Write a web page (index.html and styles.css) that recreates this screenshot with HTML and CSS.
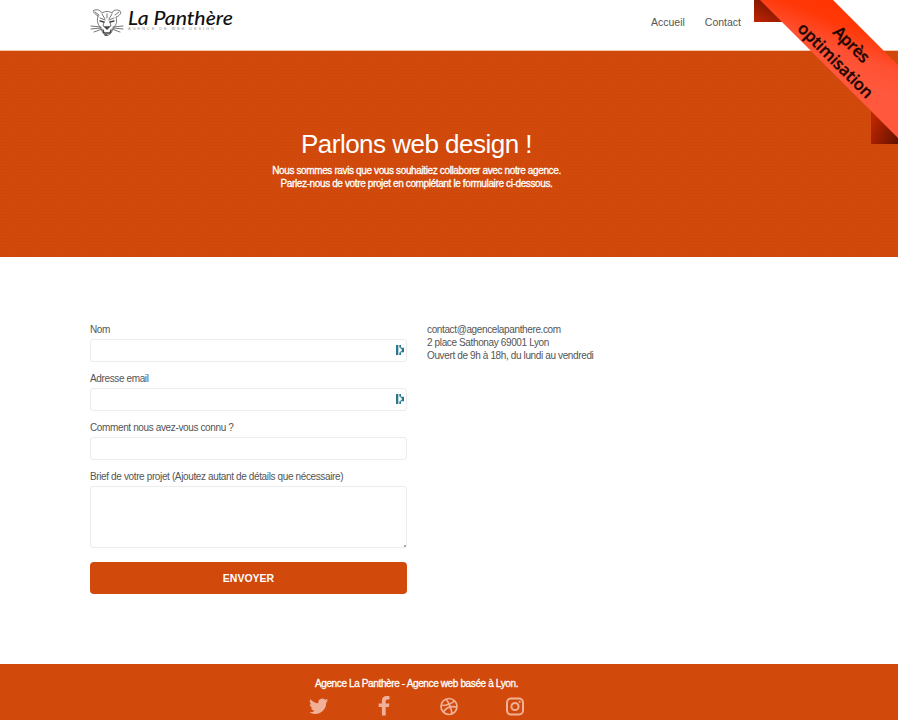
FILE: index.html
```html
<!DOCTYPE html>
<html lang="fr">
<head>
<meta charset="utf-8">
<title>La Panthère - Contact</title>
<link rel="stylesheet" href="styles.css">
</head>
<body>
<header class="header">
  <div class="container header-row">
    <svg class="logo" width="148" height="40" viewBox="0 -8 148 40" role="img" aria-label="La Panthère">
      <g fill="none" stroke="#666" stroke-width=".9" stroke-linecap="round" stroke-linejoin="round">
        <path d="M8 8C3 5 2 2 5 2c3-1 6 1 7 3 3-2 7-2 10 0 1-3 5-4 8-2 2 1 0 5-4 6 1 4 1 7-2 10l-3 6c-2 3-6 3-8 0l-3-6C7 15 7 12 8 8z"/>
        <path d="M5 4l4 3m20-3-4 3M12 6l3 5m7-5-3 5M17 6v4M10 10l5 2m9-2-5 2M14 14l-1 4 4 2 4-2-1-4M1 18l10 1M1 21l10-1M4 24l8-3m21-3-10 1m10 2-10-1m7 4-8-3"/>
        <path stroke="#444" stroke-width="1.4" d="M10 13l4 1m10-1-4 1M15 19h4l-2 2zM13 22l1 3h6l1-3M15 27h2"/>
      </g>
      <text class="logo-name" x="38" y="17" textLength="105" lengthAdjust="spacingAndGlyphs">La Panthère</text>
      <text class="logo-tag" x="38" y="21.500" textLength="86">AGENCE DE WEB DESIGN</text>
    </svg>
    <nav class="nav"><a>Accueil</a><a>Contact</a></nav>
  </div>
</header>
<main>
  <section class="hero">
    <div class="container">
      <h1>Parlons web design !</h1>
      <p class="intro-first">Nous sommes ravis que vous souhaitiez collaborer avec notre agence.</p>
      <p class="intro-second">Parlez-nous de votre projet en complétant le formulaire ci-dessous.</p>
    </div>
  </section>
  <section class="container contact">
    <form class="form">
      <label for="nom">Nom</label>
      <div class="field"><input id="nom" type="text">
        <svg class="filler" width="8" height="10" viewBox="0 0 8 10"><path d="M0 0h2.300v10H0zM3.300 0H5v2.500H3.300zM3.300 7.500H5V10H3.300zM5.700 2.700H8v4.600H5.700zM4.500 2.500h1.200v1.200H4.500zM4.500 6.300h1.200v1.200H4.500z"/></svg></div>
      <label for="email">Adresse email</label>
      <div class="field"><input id="email" type="text">
        <svg class="filler" width="8" height="10" viewBox="0 0 8 10"><path d="M0 0h2.300v10H0zM3.300 0H5v2.500H3.300zM3.300 7.500H5V10H3.300zM5.700 2.700H8v4.600H5.700zM4.500 2.500h1.200v1.200H4.500zM4.500 6.300h1.200v1.200H4.500z"/></svg></div>
      <label for="source">Comment nous avez-vous connu ?</label>
      <div class="field"><input id="source" type="text"></div>
      <label for="brief">Brief de votre projet (Ajoutez autant de détails que nécessaire)</label>
      <div class="field field-area"><textarea id="brief"></textarea><i class="grip"></i></div>
      <button type="button">ENVOYER</button>
    </form>
    <address>
      <span class="mail">contact@agencelapanthere.com</span>
      <span class="street">2 place Sathonay 69001 Lyon</span>
      <span class="hours">Ouvert de 9h à 18h, du lundi au vendredi</span>
    </address>
  </section>
</main>
<footer class="footer">
  <div class="container">
    <p>Agence La Panthère - Agence web basée à Lyon.</p>
    <div class="social">
      <svg width="20" height="20" viewBox="-1.500 -.5 25 25"><path fill="currentColor" d="M23.6 4.9c-.9.4-1.800.6-2.800.8 1-.6 1.800-1.600 2.100-2.700-.9.600-2 1-3.100 1.200A4.900 4.900 0 0 0 11.500 8.700C7.400 8.500 3.800 6.500 1.400 3.600.1 5.900.8 8.700 2.900 10.100c-.8 0-1.600-.2-2.200-.6 0 2.300 1.600 4.400 3.900 4.900-.7.200-1.500.2-2.200.1.600 2 2.400 3.300 4.600 3.400A9.900 9.900 0 0 1 0 19.900 13.900 13.900 0 0 0 21.200 7.500c1-.7 1.800-1.600 2.400-2.600z"/></svg>
      <svg width="20" height="20" viewBox="0 0 20 20"><path fill="currentColor" d="M15.500.2v3.200h-2c-1.500 0-1.800.7-1.800 1.800v2.200h3.700l-.5 3.600h-3.200V19.500H7.900V11H4.700V7.400h3.200V4.600C7.900 1.500 9.800 0 12.700 0c1.300 0 2.500.1 2.800.2z"/></svg>
      <svg width="20" height="20" viewBox="0 -.5 20 20" fill="none" stroke="currentColor" stroke-width="1.700"><circle cx="10" cy="10" r="8"/><path d="M7 2.600c3 4 5 8 6 14.500M2.200 9c6 0 10-1 13.300-4.700M4.400 15.700c3-5 7-6.500 13.500-5"/></svg>
      <svg width="20" height="20" viewBox="0 -.5 20 20" fill="none" stroke="currentColor" stroke-width="2"><rect x="2" y="2" width="16" height="16" rx="4"/><circle cx="10" cy="10" r="3.600"/><circle cx="14.700" cy="5.300" r="1.100" fill="currentColor" stroke="none"/></svg>
    </div>
  </div>
</footer>
<svg class="ribbon" width="145" height="145" viewBox="0 0 145 145">
  <defs>
    <linearGradient id="band" gradientUnits="userSpaceOnUse" x1="85" y1="0" x2="60" y2="65"><stop offset="0" stop-color="#ff3400"/><stop offset=".3" stop-color="#ff3808"/><stop offset=".65" stop-color="#ff5032"/><stop offset="1" stop-color="#ff583c"/></linearGradient>
    <linearGradient id="foldTop" x1="0" y1="1" x2=".7" y2="0"><stop offset="0" stop-color="#c02400"/><stop offset="1" stop-color="#721300"/></linearGradient>
    <linearGradient id="foldEnd" x1="0" y1=".4" x2="1" y2="1"><stop offset="0" stop-color="#bd2600"/><stop offset="1" stop-color="#611000"/></linearGradient>
  </defs>
  <path fill="url(#foldTop)" d="M1 0h8l22 22H1z"/>
  <path fill="url(#foldEnd)" d="M118 110l27 27v7h-27z"/>
  <path fill="url(#band)" d="M7 0h73l65 65v73z"/>
  <g class="ribbon-text" text-anchor="middle">
    <text transform="translate(94.500 48.500) rotate(45)" textLength="44">Après</text>
    <text transform="translate(78.500 64.500) rotate(45)" textLength="99">optimisation</text>
  </g>
</svg>
</body>
</html>
```
FILE: styles.css
```css
* { box-sizing: border-box; }
body {
  margin: 0;
  height: 720px;
  overflow: hidden;
  display: flex;
  flex-direction: column;
  position: relative;
  background: #fff;
  color: #555;
  font: 10px/13.300px "Liberation Sans", Arial, sans-serif;
  letter-spacing: -0.370px;
}
h1, p { margin: 0; font-weight: 400; }
.container { width: 653px; margin-left: 90px; }
.header { height: 51px; flex: none; border-bottom: 1px solid #f3c6aa; }
.header-row { display: flex; justify-content: space-between; align-items: flex-start; }
.logo { display: block; overflow: visible; letter-spacing: 0; }
.logo-name { font: italic 500 19px Lato, sans-serif; fill: #111; }
.logo-tag { font: 4px "Liberation Sans", sans-serif; fill: #999; }
.nav { display: flex; gap: 20px; margin: 15px 2px 0 0; font-size: 10.500px; line-height: 14px; letter-spacing: 0; }
.hero {
  height: 205.500px;
  flex: none;
  padding-top: 77px;
  text-align: center;
  color: #fff;
  background-color: #d1490b;
  background-image: radial-gradient(circle, #c8460b 0.500px, transparent 1px);
  background-size: 3px 3px;
}
.hero h1 { font-size: 26px; line-height: 32px; letter-spacing: -0.520px; }
.hero p { -webkit-text-stroke: 0.300px #fff; }
.hero .intro-first { margin-top: 4px; }
.contact { display: grid; grid-template-columns: 317px 1fr; gap: 20px; height: 407px; flex: none; padding-top: 66px; }
.form { display: flex; flex-direction: column; align-items: stretch; }
label { line-height: 13px; margin-bottom: 3px; }
.field { height: 23px; margin-bottom: 10px; position: relative; }
input, textarea {
  display: block;
  width: 100%;
  height: 100%;
  border: 1px solid #ececec;
  border-radius: 3px;
  background: #fff;
  resize: none;
}
.filler { position: absolute; right: 3px; top: 6px; fill: #28778a; }
.field-area { height: 62px; margin-bottom: 14px; }
.grip { position: absolute; right: 1px; bottom: 1px; width: 2px; height: 2px; background: #aaa; }
button {
  height: 32px;
  border: 0;
  border-radius: 4px;
  background: #d1490b;
  color: #fff;
  font: bold 10.500px "Liberation Sans", Arial, sans-serif;
}
address { font-style: normal; }
address span { display: block; }
.footer { flex: 1; padding-top: 13px; background: #d1490b; color: #fff; text-align: center; }
.footer p { -webkit-text-stroke: 0.300px #fff; }
.social { display: flex; justify-content: space-between; width: 217px; margin: 6px auto 0; color: #f0b198; }
.ribbon { position: absolute; top: 0; right: 0; letter-spacing: 0; }
.ribbon-text { font: 600 16.500px "Open Sans", "Noto Sans", sans-serif; fill: #1c0500; stroke: #1c0500; stroke-width: 0.300px; }
```
